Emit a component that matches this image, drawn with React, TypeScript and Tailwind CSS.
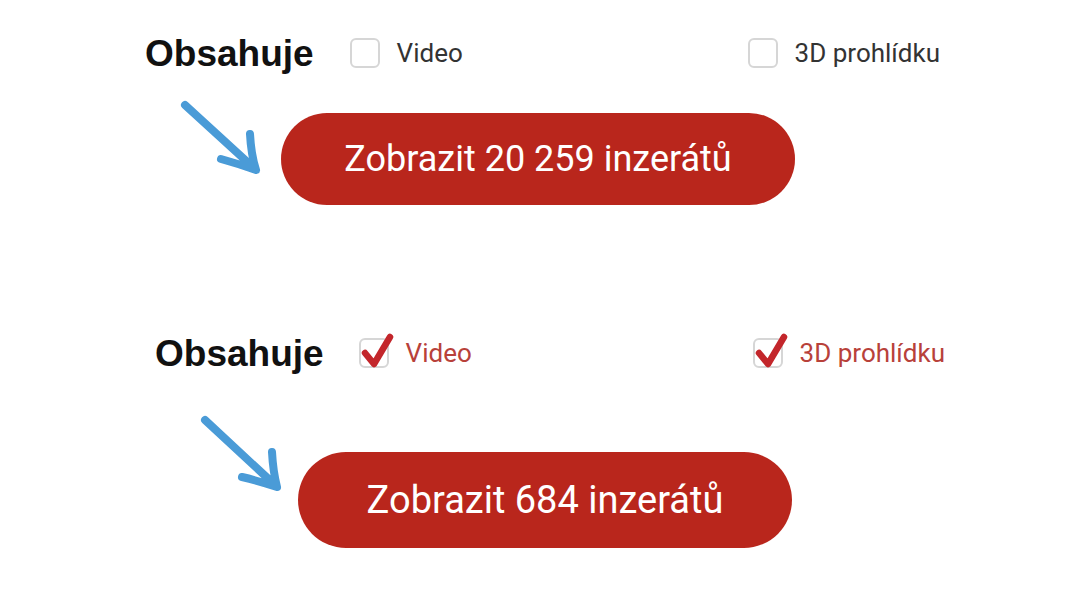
import React from 'react'

const labelFont = { fontFamily: 'Roboto, "Liberation Sans", sans-serif' }
const titleFont = { fontFamily: '"Liberation Sans", Arial, sans-serif' }

const CheckBox = ({ checked }: { checked: boolean }) => (
  <span className="relative block w-[30px] h-[30px] shrink-0 rounded-[6px] border-2 border-[#d6d6d6] bg-white">
    {checked && (
      <svg className="absolute -left-[2px] -top-[8px]" width="36" height="38" viewBox="0 0 36 38" fill="none">
        <path d="M6 21 L15 32 L31 5" stroke="#c3262b" strokeWidth="6.5" strokeLinecap="round" strokeLinejoin="round" />
      </svg>
    )}
  </span>
)

const Option = ({ label, checked }: { label: string; checked: boolean }) => (
  <div className="flex items-center gap-[17px]">
    <CheckBox checked={checked} />
    <span
      className={`text-[26px] leading-none ${checked ? 'text-[#b8413a]' : 'text-[#333333]'}`}
      style={labelFont}
    >
      {label}
    </span>
  </div>
)

const Arrow = ({ w, h, d }: { w: number; h: number; d: string }) => (
  <svg width={w} height={h} viewBox={`0 0 ${w} ${h}`} fill="none" className="shrink-0">
    <path d={d} stroke="#4a9bd7" strokeWidth="8" strokeLinecap="round" strokeLinejoin="round" />
  </svg>
)

const FilterRow = ({ checked, padLeft, titleGap, groupWidth }: { checked: boolean; padLeft: string; titleGap: string; groupWidth: string }) => (
  <div className={`flex items-center h-[30px] ${padLeft}`}>
    <h2 className={`text-[37px] font-bold leading-none text-[#111111] ${titleGap}`} style={titleFont}>
      Obsahuje
    </h2>
    <div className={groupWidth}>
      <Option label="Video" checked={checked} />
    </div>
    <Option label="3D prohlídku" checked={checked} />
  </div>
)

export default function App() {
  return (
    <div className="w-[1080px] h-[598px] bg-white pt-[38px] overflow-hidden">
      <FilterRow checked={false} padLeft="pl-[145px]" titleGap="mr-[36px]" groupWidth="w-[398px]" />

      <div className="flex items-start mt-[30px] pl-[175px]">
        <Arrow w={90} h={80} d="M10 7 L79 70 M75 36 Q76 56 81 72 Q64 66 46 61" />
        <button
          className="ml-[16px] mt-[15px] w-[514px] h-[92px] rounded-full bg-[#b9261c] text-white text-[36px] leading-none flex items-center justify-center"
          style={labelFont}
        >
          Zobrazit 20 259 inzerátů
        </button>
      </div>

      <div className="mt-[133px]">
        <FilterRow checked={true} padLeft="pl-[155px]" titleGap="mr-[35px]" groupWidth="w-[394px]" />
      </div>

      <div className="flex items-start mt-[45px] pl-[198px]">
        <Arrow w={90} h={82} d="M7 7 L77 72 M74 39 Q75 58 79 74 Q61 68 44 64" />
        <button
          className="ml-[10px] mt-[39px] w-[494px] h-[96px] rounded-full bg-[#b9261c] text-white text-[38px] leading-none flex items-center justify-center"
          style={labelFont}
        >
          Zobrazit 684 inzerátů
        </button>
      </div>
    </div>
  )
}
